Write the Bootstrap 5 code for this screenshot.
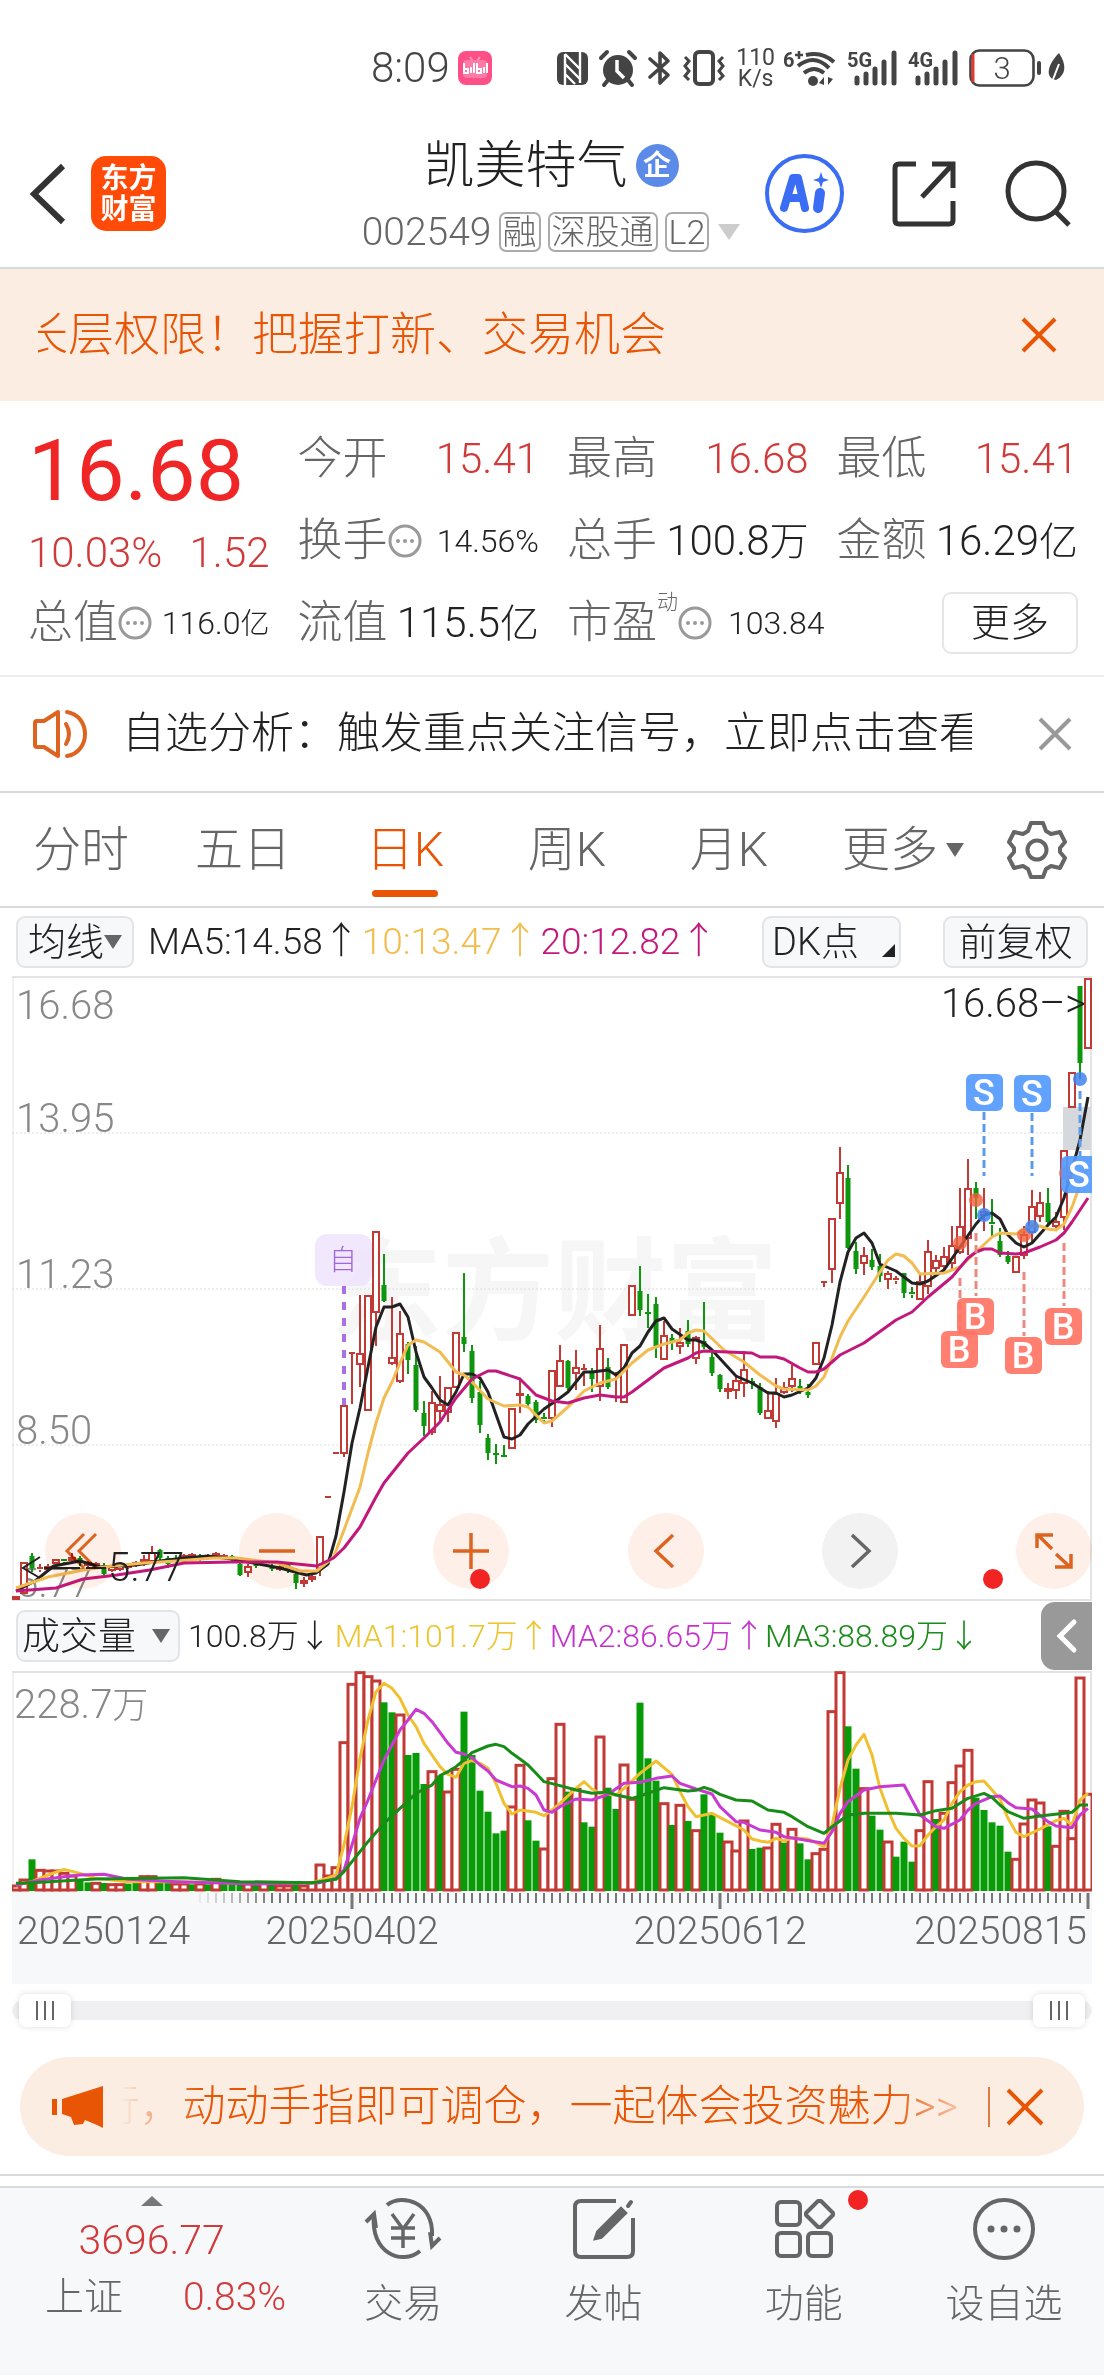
<!DOCTYPE html>
<html lang="zh-CN">
<head>
<meta charset="utf-8">
<meta name="viewport" content="width=device-width, initial-scale=1">
<title>凯美特气 002549</title>
<link href="https://cdn.jsdelivr.net/npm/bootstrap@5.3.0/dist/css/bootstrap.min.css" rel="stylesheet">
<style>
:root{--ink:#222;--gray:#666;--pale:#999;--up:#d03a3a;--brand:#e85505;--tint:#fcede3;--panel:#f7f8fa;--rule:#d9dadc}
body{font-family:Roboto,"Noto Sans CJK SC",sans-serif;font-weight:300;color:var(--ink);background:#fff;line-height:1.2}
button{font-weight:300;color:inherit}
svg{display:block;flex:none;overflow:visible}
svg text{font-family:Roboto,"Noto Sans CJK SC",sans-serif;font-weight:300}
.plain{border:0;background:none;padding:0}
.c-gray{color:var(--gray)}.c-up{color:var(--up)}.c-brand{color:var(--brand)}
.status-row{height:120px;padding:16px 38px 0 371px;color:#444;font-size:42px}
.status-icons{gap:11px}
.net-rate{font-size:23px;line-height:21px;font-weight:400}
.app-head{height:149px;border-bottom:2px solid var(--rule);padding:0 32px 0 30px}
.brand-box{width:75px;height:75px;border-radius:15px;background:#ff4a08;color:#fff;font-weight:700;font-size:28px;line-height:31px}
.stock-name{font-size:51px;line-height:66px}
.stock-code{font-size:39px;line-height:66px;color:var(--gray);gap:7px}
.tag-box{font-size:34px;line-height:36px;border:2px solid #aaa;border-radius:7px;padding:0 2px}
.corp-dot{width:43px;height:43px;border-radius:50%;background:#5b8ae8;color:#fff;font-weight:700;font-size:28px}
.notice{height:132px;background:var(--tint);font-size:46px;padding:0 47px 0 38px}
.clip{overflow:hidden;white-space:nowrap}
.notice .clip{width:628px;direction:rtl}
.notice .clip span{direction:ltr;unicode-bidi:embed}
.quote{display:grid;grid-template-columns:repeat(4,minmax(0,1fr));grid-auto-rows:82px;column-gap:28px;padding:17px 26px 11px 28px;border-bottom:2px solid #ececec}
.quote .big{grid-row:span 2}
.price{font-size:86px;line-height:106px;font-weight:400;color:#f02525}
.change{font-size:42px;line-height:58px}
.cell{font-size:45px;white-space:nowrap}
.num{font-size:42px}.num-s{font-size:32px}
.wan{font-size:39px}.wan-s{font-size:29px}
.dyn{font-size:21px;color:var(--gray);align-self:flex-start;margin-top:8px}
.more-btn{width:136px;height:62px;border:2px solid #e6e6e6;border-radius:9px;font-size:39px}
.ticker{height:116px;border-bottom:2px solid var(--rule);padding:0 32px;font-size:43px}
.ticker .clip{margin:0 66px 0 34px}
.tabs-row{height:115px;border-bottom:2px solid var(--rule);font-size:48px;padding-right:26px;color:var(--gray)}
.tabs-row button{flex:162 1 0;height:100%;position:relative}
.tabs-row .wide{flex-grow:186}.tabs-row .gear{flex-grow:82}
.tabs-row .on{color:var(--brand)}
.tabs-row .on::after{content:"";position:absolute;left:50%;bottom:9px;width:66px;margin-left:-33px;height:7px;border-radius:4px;background:var(--brand)}
.chip{height:52px;background:var(--panel);border:2px solid #e2e4e8;border-radius:9px;font-size:38px;line-height:46px;white-space:nowrap}
.chip-l{width:118px}.chip-m{width:139px}.chip-r{width:145px}
.ind-row{height:68px;padding:0 16px;font-size:37px;white-space:nowrap;gap:2px}
.vol-row{height:70px;padding-left:16px;font-size:32px;white-space:nowrap}
.side-tab{width:51px;height:68px;background:#999;border-radius:14px 0 0 14px;margin-right:12px}
.plot{margin:0 12px;position:relative}
.plot svg.fit{width:100%;height:auto;overflow:hidden}
.tools{position:absolute;left:33px;right:0;bottom:12px;mix-blend-mode:multiply}
.tools button{width:76px;height:76px;border-radius:50%;background:#fef0e9;position:relative}
.tools .off{background:#f2f2f2}
.red-dot{position:absolute;width:20px;height:20px;border-radius:50%;background:#f22323}
.range-row{height:73px;margin:0 12px;position:relative}
.track{position:absolute;left:0;right:0;top:17px;height:19px;border-radius:10px;background:#f0f0f2}
.range-row input{position:absolute;left:7px;right:7px;top:10px;width:calc(100% - 14px);height:33px;margin:0;appearance:none;background:none;pointer-events:none}
.range-row input::-webkit-slider-thumb{appearance:none;pointer-events:auto;width:52px;height:33px;border-radius:7px;box-shadow:0 0 6px #0002;background:linear-gradient(#666,#666) 17px 7px/2px 19px no-repeat,linear-gradient(#666,#666) 25px 7px/2px 19px no-repeat,linear-gradient(#666,#666) 33px 7px/2px 19px no-repeat,#fff}
.promo{height:99px;margin:0 20px 18px;border-radius:50px;background:var(--tint);font-size:43px;padding:0 40px 0 32px}
.promo .fade-text{margin-left:16px;width:838px;direction:rtl;-webkit-mask-image:linear-gradient(90deg,transparent,#000 80px,#000 770px,#0004 840px)}
.promo .fade-text span{direction:ltr;unicode-bidi:embed}
.gap-strip{height:12px;border-top:2px solid var(--rule)}
.bottom-nav{height:189px;background:var(--panel);border-top:2px solid var(--rule);color:var(--gray);font-size:39px}
.bottom-nav .idx{flex:303 1 0;padding-top:8px;line-height:54px}
.bottom-nav .item{flex:200 1 0;position:relative;padding-top:8px;text-decoration:none;color:inherit;line-height:48px;gap:18px}
.idx .val{font-size:41px;line-height:60px}
.idx .pair{gap:60px;padding-left:28px}
</style>
</head>
<body>
<div class="status-row d-flex align-items-center">
  <span>8:09</span>
  <svg class="ms-2" width="34" height="34" viewBox="0 0 34 34"><rect width="34" height="34" rx="8" fill="#ff4f87"/><path d="M12 6l3 4M22 6l-3 4" stroke="#ff9dbd" stroke-width="2"/><rect x="5" y="9" width="24" height="18" rx="4" fill="#ff7aa5"/><path d="M6 12v10h4v-4H6M13 16v6M16 12v10M19 12v10h4v-4h-4M26 16v6M29 12v10" stroke="#fff" stroke-width="2" fill="none"/></svg>
  <div class="status-icons d-flex align-items-center ms-auto">
    <svg width="31" height="33" viewBox="0 0 31 33"><rect width="31" height="33" rx="6" fill="#444"/><path d="M8 33V2M8 2l15 15M8 12l15 15M8 22l10 10M23 0v31" stroke="#fff" stroke-width="2.4" fill="none"/></svg>
    <svg width="38" height="36" viewBox="0 0 38 36"><circle cx="19" cy="20" r="15" fill="#444"/><path d="M2 8l6-6M36 8l-6-6M9 30l-4 5M29 30l4 5" stroke="#444" stroke-width="4" stroke-linecap="round"/><path d="M18 10v11l7 7" stroke="#fff" stroke-width="3.5" fill="none"/></svg>
    <svg width="24" height="36" viewBox="0 0 24 36"><path d="M2 9l18 16-8 8V3l8 8L2 27" fill="none" stroke="#444" stroke-width="3.6" stroke-linejoin="round" stroke-linecap="round"/></svg>
    <svg width="42" height="36" viewBox="0 0 42 36"><rect x="12" y="2" width="18" height="32" rx="4" fill="none" stroke="#444" stroke-width="4"/><path d="M2 7l4 4-4 5 4 5-4 5 4 4M40 7l-4 4 4 5-4 5 4 5-4 4" fill="none" stroke="#444" stroke-width="3"/></svg>
    <div class="net-rate text-center">110<br>K/s</div>
    <svg width="50" height="38" viewBox="0 0 50 38"><text x="-3" y="18" font-size="20" fill="#444" style="font-weight:700">6</text><path d="M9 6h8M13 2v8" stroke="#444" stroke-width="2.5"/><g fill="none" stroke="#444" stroke-width="4"><path d="M20 6Q36 2 48 13M12 17Q28 4 43 19M18 24q10-8 20 0"/></g><circle cx="27" cy="32" r="5" fill="#444"/><path d="M33 34l5-6v8zM47 30l-5 6v-8z" fill="#444"/></svg>
    <svg width="50" height="36" viewBox="0 0 50 36"><text x="0" y="17" font-size="20" fill="#444" style="font-weight:700">5G</text><path d="M10 28v5M19 24v9M28 19v14M37 12v21M47 3v30" stroke="#444" stroke-width="5" stroke-linecap="round"/></svg>
    <svg width="50" height="36" viewBox="0 0 50 36"><text x="0" y="17" font-size="20" fill="#444" style="font-weight:700">4G</text><path d="M10 28v5M19 24v9M28 19v14M37 12v21M47 3v30" stroke="#444" stroke-width="5" stroke-linecap="round"/></svg>
    <svg width="72" height="38" viewBox="0 0 72 38"><rect x="1.500" y="1.500" width="63" height="35" rx="9" fill="none" stroke="#444" stroke-width="2.600"/><path d="M4 5v28" stroke="#e5392f" stroke-width="3"/><path d="M70 14v10" stroke="#444" stroke-width="4" stroke-linecap="round"/><text x="33" y="30" font-size="31" text-anchor="middle" fill="#444">3</text></svg>
    <svg style="margin-left:-6px" width="20" height="32" viewBox="0 0 20 32"><path d="M13 1c8 12 7 22-3 27C-2 26 2 12 13 1z" fill="#444"/><path d="M13 12L6 30" stroke="#fff" stroke-width="2"/></svg>
  </div>
</div>

<header class="app-head d-flex align-items-center">
  <div class="d-flex align-items-center" style="flex:1 1 0">
    <button class="plain" aria-label="返回"><svg width="37" height="62" viewBox="0 0 37 62"><path d="M33 3L4 31l29 28" fill="none" stroke="#333" stroke-width="6"/></svg></button>
    <div class="brand-box d-flex align-items-center justify-content-center ms-4 text-center"><span>东方<br>财富</span></div>
  </div>
  <div style="padding-top:10px">
    <div class="stock-name d-flex align-items-center justify-content-center gap-2"><span>凯美特气</span><span class="corp-dot d-flex align-items-center justify-content-center">企</span></div>
    <div class="stock-code d-flex align-items-center justify-content-center"><span>002549</span><span class="tag-box">融</span><span class="tag-box">深股通</span><span class="tag-box">L2</span><svg width="24" height="18" viewBox="0 0 24 18"><path d="M2 1h22L13 17z" fill="#ccc"/></svg></div>
  </div>
  <div class="d-flex align-items-center justify-content-end" style="flex:1 1 0;gap:48px">
    <button class="plain" aria-label="Ai"><svg width="79" height="79" viewBox="0 0 79 79"><circle cx="39.500" cy="39.500" r="37.500" fill="#fff" stroke="#3a6cf4" stroke-width="4"/><g fill="none" stroke="#3a6cf4" stroke-linejoin="round" stroke-linecap="round"><path d="M19 54l9-30h5l7 30M24 44h12" stroke-width="8"/><path d="M55 39l-2 15" stroke-width="10"/></g><path d="M56 18l2 6 6 2-6 2-2 6-2-6-6-2 6-2z" fill="#3a6cf4"/></svg></button>
    <button class="plain" aria-label="分享"><svg width="64" height="66" viewBox="0 0 64 66"><path d="M24 3H7q-4 0-4 4v52q0 4 4 4h50q4 0 4-4V40" fill="none" stroke="#333" stroke-width="5"/><path d="M40 3h21v24M60 4L30 36" fill="none" stroke="#333" stroke-width="5"/></svg></button>
    <button class="plain" aria-label="搜索"><svg width="68" height="68" viewBox="0 0 68 68"><circle cx="32" cy="31" r="28" fill="none" stroke="#333" stroke-width="5"/><path d="M51 51l14 14" stroke="#333" stroke-width="5"/></svg></button>
  </div>
</header>

<div class="notice d-flex align-items-center justify-content-between c-brand">
  <div class="clip"><span>成长层权限！把握打新、交易机会</span></div>
  <button class="plain c-brand" aria-label="关闭公告"><svg width="36" height="36" viewBox="0 0 36 36"><path d="M2 2l32 32M34 2L2 34" stroke="currentColor" stroke-width="4"/></svg></button>
</div>

<section class="quote">
  <div class="big"><div class="price">16.68</div><div class="change c-up d-flex justify-content-between"><span>10.03%</span><span>1.52</span></div></div>
  <div class="cell d-flex align-items-center justify-content-between"><span class="c-gray">今开</span><span class="num c-up">15.41</span></div>
  <div class="cell d-flex align-items-center justify-content-between"><span class="c-gray">最高</span><span class="num c-up">16.68</span></div>
  <div class="cell d-flex align-items-center justify-content-between"><span class="c-gray">最低</span><span class="num c-up">15.41</span></div>
  <div class="cell d-flex align-items-center justify-content-between"><span class="c-gray d-flex align-items-center">换手<svg width="34" height="34" viewBox="0 0 34 34"><use href="#dots"/></svg></span><span class="num-s">14.56%</span></div>
  <div class="cell d-flex align-items-center justify-content-between"><span class="c-gray">总手</span><span class="num">100.8<span class="wan">万</span></span></div>
  <div class="cell d-flex align-items-center justify-content-between"><span class="c-gray">金额</span><span class="num">16.29<span class="wan">亿</span></span></div>
  <div class="cell d-flex align-items-center justify-content-between"><span class="c-gray d-flex align-items-center">总值<svg width="34" height="34" viewBox="0 0 34 34"><use href="#dots"/></svg></span><span class="num-s">116.0<span class="wan-s">亿</span></span></div>
  <div class="cell d-flex align-items-center justify-content-between"><span class="c-gray">流值</span><span class="num">115.5<span class="wan">亿</span></span></div>
  <div class="cell d-flex align-items-center"><span class="c-gray">市盈</span><span class="dyn">动</span><svg width="34" height="34" viewBox="0 0 34 34"><use href="#dots"/></svg><span class="num-s ps-3">103.84</span></div>
  <div class="d-flex align-items-center justify-content-end"><button class="more-btn bg-white p-0">更多</button></div>
</section>

<div class="ticker d-flex align-items-center">
  <svg width="56" height="48" viewBox="0 0 56 48"><g fill="none" stroke="#dd6420" stroke-width="4" stroke-linejoin="round"><path d="M3 13q0-2 2-2h7L26 2v44L12 37H5q-2 0-2-2z"/><path d="M34 14q6 10 0 20M35 2c24 4 24 40 0 44" stroke-linecap="round"/></g></svg>
  <div class="clip flex-fill">自选分析：触发重点关注信号，立即点击查看</div>
  <button class="plain" aria-label="关闭提示"><svg width="34" height="34" viewBox="0 0 34 34"><path d="M2 2l30 30M32 2L2 32" stroke="#999" stroke-width="4"/></svg></button>
</div>

<nav class="tabs-row d-flex align-items-center">
  <button class="plain">分时</button><button class="plain">五日</button><button class="plain on">日K</button><button class="plain">周K</button><button class="plain">月K</button>
  <button class="plain wide d-flex align-items-center justify-content-center gap-2">更多<svg width="18" height="14" viewBox="0 0 18 14"><path d="M0 0h18L9 14z" fill="#666"/></svg></button>
  <button class="plain gear d-flex align-items-center justify-content-center" aria-label="设置"><svg width="60" height="60" viewBox="0 0 60 60"><path d="M24 3h12l3 8 5 3 9-2 5 10-5 6v4l5 6-5 10-9-2-5 3-3 8H24l-3-8-5-3-9 2-5-10 5-6v-4l-5-6 5-10 9 2 5-3z" fill="none" stroke="#666" stroke-width="4" stroke-linejoin="round"/><circle cx="30" cy="30" r="9.500" fill="none" stroke="#666" stroke-width="4"/></svg></button>
</nav>

<div class="ind-row d-flex align-items-center">
  <button class="chip chip-l d-flex align-items-center justify-content-center p-0">均线<svg width="18" height="16" viewBox="0 0 18 16"><path d="M0 1h18L9 15z" fill="#666"/></svg></button>
  <span class="ps-2 ms-1">MA5:14.58↑</span><span style="color:#f3bd4e">10:13.47↑</span><span style="color:#c2187c">20:12.82↑</span>
  <button class="chip chip-m d-flex align-items-center justify-content-between ms-auto ps-2 pe-1 me-4">DK点<svg class="align-self-end mb-2" width="13" height="13" viewBox="0 0 13 13"><path d="M13 0v13H0z" fill="#222"/></svg></button>
  <button class="chip chip-r ms-3 p-0">前复权</button>
</div>

<div class="plot">
  <svg class="fit" id="kline" viewBox="0 0 1080 625"></svg>
  <div class="tools d-flex justify-content-between">
    <button class="plain d-flex align-items-center justify-content-center" aria-label="最左"><svg width="34" height="38" viewBox="0 0 34 38"><path d="M18 2L1 19l17 17M30 2L13 19l17 17" fill="none" stroke="#dd6420" stroke-width="3"/></svg></button>
    <button class="plain d-flex align-items-center justify-content-center" aria-label="缩小"><svg width="38" height="38" viewBox="0 0 38 38"><path d="M1 19h36" stroke="#dd6420" stroke-width="3.500"/></svg></button>
    <button class="plain d-flex align-items-center justify-content-center" aria-label="放大"><svg width="38" height="38" viewBox="0 0 38 38"><path d="M1 19h36M19 1v36" stroke="#dd6420" stroke-width="3.500"/></svg><i class="red-dot" style="right:19px;bottom:0"></i></button>
    <button class="plain d-flex align-items-center justify-content-center" aria-label="左移"><svg width="24" height="36" viewBox="0 0 24 36"><path d="M19 2L2 18l17 16" fill="none" stroke="#dd6420" stroke-width="3.500"/></svg></button>
    <button class="plain off d-flex align-items-center justify-content-center" aria-label="右移"><svg width="20" height="36" viewBox="0 0 20 36"><path d="M2 2l17 16L2 34" fill="none" stroke="#666" stroke-width="3.500"/></svg></button>
    <button class="plain d-flex align-items-center justify-content-center" aria-label="全屏"><svg width="38" height="38" viewBox="0 0 38 38"><path d="M2 16V3h16M3 3l14 14M36 22v13H20M35 35L21 22" fill="none" stroke="#dd6420" stroke-width="3.500"/></svg><i class="red-dot" style="left:-33px;bottom:0"></i></button>
  </div>
</div>

<div class="vol-row d-flex align-items-center">
  <button class="chip d-flex align-items-center ps-1 pe-2 gap-3">成交量<svg width="18" height="14" viewBox="0 0 18 14"><path d="M0 0h18L9 14z" fill="#666"/></svg></button>
  <span class="ms-2 me-1">100.8万↓</span><span style="color:#ecc52e">MA1:101.7万↑</span><span style="color:#c434cc">MA2:86.65万↑</span><span style="color:#1b8c1b">MA3:88.89万↓</span>
  <button class="plain side-tab ms-auto d-flex align-items-center justify-content-center" aria-label="展开"><svg width="20" height="34" viewBox="0 0 20 34"><path d="M17 3L3 17l14 14" fill="none" stroke="#fff" stroke-width="5" stroke-linecap="round"/></svg></button>
</div>
<div class="plot"><svg class="fit" id="volume" viewBox="0 0 1080 313"></svg></div>

<div class="range-row">
  <div class="track"></div>
  <input type="range" min="0" max="134" value="0" aria-label="起始日期">
  <input type="range" min="0" max="134" value="134" aria-label="结束日期">
</div>

<div class="promo d-flex align-items-center c-brand">
  <svg width="52" height="44" viewBox="0 0 52 44"><path d="M0 14h5v16H0zM10 14L51 1v42l-6-3-12-5-2 4-9 1-3-8-9-3z" fill="#e85505"/></svg>
  <div class="clip fade-text"><span>行，动动手指即可调仓，一起体会投资魅力&gt;&gt;</span></div>
  <svg class="ms-auto me-3" width="2" height="40" viewBox="0 0 2 40"><path d="M1 0v40" stroke="#e07a45" stroke-width="2"/></svg>
  <button class="plain c-brand" aria-label="关闭推广"><svg width="38" height="38" viewBox="0 0 38 38"><path d="M2 2l34 34M36 2L2 36" stroke="currentColor" stroke-width="4"/></svg></button>
</div>
<div class="gap-strip"></div>

<nav class="bottom-nav d-flex">
  <div class="idx text-center">
    <svg class="mx-auto" width="22" height="10" viewBox="0 0 22 10"><path d="M0 10L11 0l11 10z" fill="#777"/></svg>
    <div class="val c-up mt-1">3696.77</div>
    <div class="pair d-flex justify-content-center"><span>上证</span><span class="c-up">0.83%</span></div>
  </div>
  <a class="item d-flex flex-column align-items-center" href="#trade"><svg width="74" height="66" viewBox="0 0 74 66"><g fill="none" stroke="#666" stroke-width="4"><path d="M21 9C36-3 68 6 66 40M54 55C36 70 4 57 8 19M0 26l8-8 2 14M74 42l-8 8-2-14"/><path d="M26 18l11 15 11-15M37 33v19M25 32h24M25 42h24" stroke-width="3.500"/></g></svg><span>交易</span></a>
  <a class="item d-flex flex-column align-items-center" href="#post"><svg width="64" height="66" viewBox="0 0 64 66"><path d="M44 5H9q-6 0-6 6v44q0 6 6 6h46q6 0 6-6V22" fill="none" stroke="#666" stroke-width="4"/><path d="M56 10l3-4M24 42l2-6 23-23 4 4-24 24z" fill="#666" stroke="#666" stroke-width="4" stroke-linecap="round"/></svg><span>发帖</span></a>
  <a class="item d-flex flex-column align-items-center" href="#features"><svg width="62" height="66" viewBox="0 0 62 66"><g fill="none" stroke="#666" stroke-width="4"><rect x="4" y="6" width="23" height="23" rx="4"/><rect x="4" y="37" width="23" height="23" rx="4"/><rect x="35" y="37" width="23" height="23" rx="4"/><path d="M45 5l3 0 12 12v2L48 31h-3L33 19v-2z" stroke-linejoin="round"/></g></svg><i class="red-dot" style="left:50%;top:2px;margin-left:44px"></i><span>功能</span></a>
  <a class="item d-flex flex-column align-items-center" href="#watch"><svg width="64" height="66" viewBox="0 0 64 66"><circle cx="32" cy="33" r="29" fill="none" stroke="#666" stroke-width="4"/><g fill="#666"><circle cx="19" cy="33" r="3.500"/><circle cx="32" cy="33" r="3.500"/><circle cx="45" cy="33" r="3.500"/></g></svg><span>设自选</span></a>
</nav>

<svg width="0" height="0" class="position-absolute"><defs><g id="dots"><circle cx="17" cy="17" r="15" fill="none" stroke="#999" stroke-width="3"/><circle cx="10" cy="17" r="2" fill="#999"/><circle cx="17" cy="17" r="2" fill="#999"/><circle cx="24" cy="17" r="2" fill="#999"/></g></defs></svg>

<script src="https://cdn.jsdelivr.net/npm/bootstrap@5.3.0/dist/js/bootstrap.bundle.min.js"></script>
<script>
// One entry per trading day: colour, high, body top, body bottom, low (chart units)
const candles = `r 620 620 624 624|r 586 586 618 618|g 577 580 592 596|r 588 592 594 596|r 588 590 594 596|r 583 583 588 588|g 583 584 586 587|r 577 581 585 588|g 580 582 586 590|r 585 586 590 591|r 586 587 590 591|g 587 590 598 599|r 590 590 595 596|r 588 589 594 595|r 587 588 592 593|r 585 586 590 591|r 579 583 587 590|r 570 576 586 588|g 573 574 582 586|g 580 582 588 592|g 579 582 586 587|r 578 579 584 586|r 577 578 582 583|g 578 580 583 585|r 578 579 582 583|r 576 577 581 583|r 578 579 582 583|g 579 580 584 586|g 585 588 599 600|r 588 590 597 601|g 585 587 590 592|g 584 586 588 590|g 588 590 593 595|r 587 590 594 595|g 587 588 592 597|g 592 598 607 613|r 601 604 608 611|r 598 600 604 606|r 560 560 593 600|r 521 521 521 521|r 477 477 477 477|r 429 429 478 481|r 377 377 377 428|r 319 377 389 411|r 319 319 435 435|r 255 255 337 370|g 278 309 325 326|r 321 381 388 389|r 335 357 406 407|g 366 368 384 398|g 370 389 434 436|g 425 437 450 460|r 415 426 457 459|r 400 428 436 447|r 411 411 437 446|r 356 356 412 412|g 297 361 368 376|g 369 375 422 427|g 405 416 449 457|g 458 462 477 484|g 468 478 478 488|g 469 480 480 481|r 432 432 473 473|r 403 417 420 437|g 418 420 428 430|g 424 426 444 447|g 437 442 444 448|r 394 394 443 451|r 369 384 411 411|g 384 385 412 414|r 374 391 398 414|r 388 393 395 410|g 392 395 403 416|r 349 372 411 425|g 382 391 411 413|r 396 398 400 426|r 368 368 427 427|r 309 309 340 340|g 290 315 334 340|g 318 337 338 352|g 321 328 372 382|r 345 359 384 384|g 358 362 367 374|r 352 366 371 378|g 344 355 368 371|r 360 361 383 388|g 326 365 371 373|g 375 381 397 400|g 398 399 413 416|r 407 412 416 423|r 401 404 415 423|r 375 393 408 421|g 402 406 408 413|g 407 411 437 439|r 415 434 443 443|r 402 417 446 452|r 406 411 417 418|r 389 402 411 416|g 403 410 414 418|g 408 416 419 422|r 366 366 389 389|r 306 306 307 311|r 242 242 294 307|r 171 196 228 243|g 189 202 272 273|g 266 275 293 298|r 271 279 288 299|g 273 284 291 294|g 278 290 300 306|r 295 297 304 313|r 300 303 305 308|g 297 297 317 322|g 311 317 319 322|r 297 305 324 324|r 264 275 311 318|r 279 284 293 300|r 271 280 291 296|r 250 269 288 293|r 212 250 277 278|r 183 212 263 279|g 206 212 222 243|r 212 235 240 255|g 223 247 249 260|g 252 265 279 281|g 275 280 286 288|r 280 280 297 297|r 250 258 280 283|r 214 230 257 268|r 216 226 241 246|g 212 227 246 250|r 236 245 251 252|r 174 174 242 254|r 96 96 132 132|g 10 10 87 103|r 2 2 73 73`.split("|").map(s => s.split(" "));
const ma5 = "0 615,2.4 605,4.7 590,8 585,10.5 591,15 589,18 585,21 582,24 580,27 583,31 589,33 592,36.3 599,37.5 597,39 588,40 560,41 516,42 467,43 432,44 391,45 351,46 331,47 331,48 328,49 341,50 376,51 401,52 412,53 424,54 429,55 416,56 398,57 398,58 402,59 416,61 461,62 463,63 459,64 448,66 433,68 422,69 416,71 396,72 396,74 394,75 399,76 392,77 377,78 370,79 356,80 345,81 342,82 353,84 364,85 364,86 367,87 374,90 400,92 407,94 417,95 417,96 421,97 419,99 412,100 402,101 382,102 349,103 306,104 276,105 262,106 257,107 267,108 288,110 295,111 301,112 307,113 308,114 305,116 294,118 271,120 248,121 239,122 237,123 243,124 259,125 267,126 271,127 267,129 249,130 241,131 222,132 194,133 164,134 121";
const ma10 = "0 612,4 601,8.4 594,12 590,16 587,20 585,24.7 582,27.6 582,32.6 587,35.5 595,37.6 595,39.7 581,41 554,43 511,44 477,45 447,46 422,47 406,48 387,49 369,50 364,51 366,53 376,55 396,56 399,57 406,59 423,61 430,63 429,64 431,66 447,67 445,69 431,71 415,73 407,75 403,77 387,79 374,81 368,83 364,84 357,85 354,86 355,88.5 374,91 386,93 399,95 410,96 413,99 414,100 410,101 401,102 382,103 361,104 345,106 321,108 296,109 284,110 278,111 280,112 287,113 298,116 297,118 291,120 276,122 261,123 257,125 258,127 250,128 250,129 253,130 254,131 248,132 231,133 209,134 190";
const ma20 = "0 615,5 612,8.4 603,12.6 599,16.7 594,21 587,27 586,32.6 586,37.6 590,39.7 582,41 572,43 551,44 536,45 521,46 507,48 487,49 477,51 462,53 446,55 422,57 403,59 395,60 395,63 403,65 419,67 425,69 427,71 422,73 419,75 421,76 421,77 416,79 404,81 392,84 382,85 377,86 375,92 377,93 381,95 381,96 383,98 392,99 396,100 396,101 393,103 379,106 367,110 344,112 336,114 321,117 301,119 282,120 276,121 273,122 273,123 277,125 278,126 277,128 271,130 264,131 257,132 246,134 222";
// Volume per day, full scale 655 = 228.7万; a minus sign marks a falling day
const vol = [15,33,-92,62,60,60,53,45,-33,-23,23,-21,19,19,-19,-27,43,43,-25,-21,21,21,-17,21,-17,35,-21,-21,-21,21,-17,25,-17,15,15,-27,15,25,78,45,70,445,620,655,643,630,-563,-533,528,-405,-411,-318,358,-343,297,365,-535,-405,-298,-235,-170,-178,252,377,-209,-148,126,337,500,-295,305,-203,-190,462,-307,-243,378,275,-562,-395,-328,262,-195,257,-207,181,-287,-225,-172,147,120,210,-123,-127,129,200,-142,185,-140,-92,112,125,538,655,-491,-364,307,-223,-181,147,-100,-145,-85,181,328,-213,233,325,375,422,-277,-240,-203,-193,-115,95,201,273,264,-191,134,239,157,639,290];
const v1 = "0 15,2 25,4 45,6 62,8 50,10 35,14 25,20 25,30 20,37 22,39 36,40 45,41 135,42 250,43 395,44 510,45 595,46 620,47 605,48 575,49 525,50 490,51 440,52 405,53 370,54 347,55 338,56 380,57 388,58 380,59 365,60 320,61 260,62 228,63 240,65 233,66 223,67 240,68 260,70 305,71 325,72 303,73 290,75 285,76 305,78 350,80 387,82 347,83 295,84 250,85 220,87 230,89 205,91 180,92 153,93 147,94 143,95 155,96 147,97 157,99 153,101 130,102 195,103 305,104 390,105 435,106 467,107 405,108 305,109 240,110 185,111 155,112 132,113 133,114 165,115 190,116 210,117 260,118 295,119 315,120 325,121 327,122 300,123 273,124 215,125 173,126 160,128 183,130 208,131 215,132 195,133 270,134 290";
const v2 = "0 15,3 30,6 40,8 45,11 47,14 32,20 25,30 18,38 22,40 35,41 60,42 135,43 215,44 270,45 330,46 390,47 435,48 480,49 510,50 542,51 530,52 505,53 473,54 440,55 413,56 408,57 397,58 375,59 357,60 330,62 310,63 312,64 305,65 285,66 240,67 233,68 250,70 273,72 270,74 287,76 320,78 323,80 335,82 342,83 320,85 303,87 288,88 250,90 205,91 203,93 180,95 173,96 160,98 152,101 140,102 175,103 230,104 265,106 300,108 310,111 315,112 270,113 225,115 190,116 185,118 210,119 240,120 260,122 280,123 282,124 262,125 247,127 243,129 205,130 192,132 187,133 225,134 245";
const v3 = "0 20,2 22,10 33,21 37,28 25,37 22,40 32,41 55,42 85,44 145,46 200,48 245,50 290,52 315,53 343,54 355,55 370,56 390,57 412,59 432,60 437,61 430,62 410,63 393,64 375,65 350,66 325,68 313,70 300,72 290,74 294,75 285,77 275,78 282,81 307,84 297,85 299,86 308,87 300,88 287,90 270,92 267,94 240,96 233,97 220,98 205,99 190,101 170,102 190,104 225,106 230,110 230,113 225,115 238,117 245,119 275,121 290,122 278,123 255,124 235,126 215,128 222,131 230,132 233,133 255,134 255";

const px = i => 4 + 8 * i;
const line = (s, color, y = v => v) => `<polyline fill="none" stroke="${color}" stroke-width="3" stroke-linejoin="round" points="${s.split(",").map(p => { const [i, v] = p.split(" ").map(Number); return px(i) + " " + y(v); }).join(" ")}"/>`;
const seg = (x1, y1, x2, y2, color, w, extra = "") => `<path d="M${x1} ${y1}L${x2} ${y2}" stroke="${color}" stroke-width="${w}" ${extra}/>`;
const label = (x, y, t, size = 40, color = "#888", extra = "") => `<text x="${x}" y="${y}" font-size="${size}" fill="${color}" ${extra}>${t}</text>`;

let k = `<text x="318" y="356" font-size="112" fill="#f6f6f6" style="font-weight:700">东方财富</text>`;
k += seg(0, 1, 1080, 1, "#e3e3e3", 2) + seg(0, 624, 1080, 624, "#e3e3e3", 2) + seg(1, 0, 1, 625, "#e3e3e3", 1) + seg(1079, 0, 1079, 625, "#e3e3e3", 2);
[157, 313, 469].forEach(y => k += seg(0, y, 1080, y, "#dcdcdc", 1, 'stroke-dasharray="2 2"'));
k += `<rect x="1051" y="131" width="28" height="43" fill="#d5d8dc"/>`;
k += label(4, 43, "16.68") + label(4, 156, "13.95") + label(4, 312, "11.23") + label(4, 468, "8.50") + label(4, 621, "5.77");
k += `<rect x="303" y="258" width="57" height="52" rx="12" fill="#efe2fd" fill-opacity=".8"/>` + label(331, 294, "自", 28, "#a266dd", 'text-anchor="middle"') + seg(332, 310, 332, 429, "#a972e0", 4, 'stroke-dasharray="8 8"');
candles.forEach(([c, hi, top, bot, lo], i) => {
  const x = px(i), h = bot - top, col = c === "r" ? "#c23a35" : "#0f960f";
  if (+hi < +top) k += seg(x, hi, x, top, col, 2);
  if (+lo > +bot) k += seg(x, bot, x, lo, col, 2);
  if (h < 3) k += seg(x - 3, top, x + 3, top, col, 2);
  else if (c === "r") k += `<rect x="${x - 3}" y="${+top + 1}" width="6" height="${h - 2}" fill="#fff" stroke="${col}" stroke-width="2"/>`;
  else k += `<rect x="${x - 2.5}" y="${top}" width="5" height="${h}" fill="${col}"/>`;
});
k += line(ma5, "#222") + line(ma10, "#f1bc52") + line(ma20, "#c2187c");
[[972, 136, 200], [1020, 137, 200], [1068, 115, 180]].forEach(([x, a, b]) => k += seg(x, a, x, b, "#5f9ce8", 3, 'stroke-dasharray="8 4"'));
[[948, 302, 355], [964, 257, 320], [1012, 296, 360], [1052, 267, 330]].forEach(([x, a, b]) => k += seg(x, a, x, b, "#e98a80", 3, 'stroke-dasharray="8 4"'));
[[964, 224], [948, 267], [1012, 259], [1054, 197]].forEach(([x, y]) => k += `<circle cx="${x}" cy="${y}" r="7" fill="#f0603c" fill-opacity=".8"/>`);
[[972, 239], [1020, 251], [1068, 103]].forEach(([x, y]) => k += `<circle cx="${x}" cy="${y}" r="7" fill="#3f83f0" fill-opacity=".85"/>`);
const sign = (x, y, t, color) => `<rect x="${x}" y="${y}" width="37" height="37" rx="6" fill="${color}" fill-opacity=".92"/><text x="${x + 18}" y="${y + 31}" font-size="36" fill="#fff" text-anchor="middle" style="font-weight:500">${t}</text>`;
k += sign(954, 98, "S", "#559aff") + sign(1002, 99, "S", "#559aff") + sign(1049, 180, "S", "#559aff");
k += sign(929, 355, "B", "#ff7464") + sign(945, 322, "B", "#ff7464") + sign(993, 361, "B", "#ff7464") + sign(1033, 332, "B", "#ff7464");
k += label(1074, 41, "16.68–&gt;", 40, "#222", 'text-anchor="end"');
k += label(96, 605, "5.77", 40, "#222") + `<path d="M28 581L11 592l17 10M32 592h36M74 592h20" fill="none" stroke="#222" stroke-width="2"/>`;
document.getElementById("kline").innerHTML = k;

const vy = v => 219 - v / 3;
let g = `<rect x="0" y="221" width="1080" height="92" fill="#f7f8fa"/>` + seg(0, 1, 1080, 1, "#e3e3e3", 2) + seg(1, 0, 1, 220, "#e3e3e3", 1) + seg(1079, 0, 1079, 220, "#e3e3e3", 2);
g += `<text x="2" y="47" font-size="40" fill="#888">228.7<tspan font-size="36">万</tspan></text>`;
vol.forEach((v, i) => {
  const x = px(i), y = vy(Math.abs(v));
  g += v > 0 ? `<rect x="${x - 4}" y="${y + 1}" width="8" height="${218 - y}" fill="#fff" stroke="#c23a35" stroke-width="3"/>` : `<rect x="${x - 3.5}" y="${y}" width="7" height="${220 - y}" fill="#079b07"/>`;
});
g += line(v1, "#f0c030", vy) + line(v2, "#c83ad0", vy) + line(v3, "#178c17", vy);
for (let i = 23; i < 135; i++) {
  const major = i === 42 || i === 88 || i === 134;
  g += seg(px(i), 222, px(i), major ? 238 : 232, "#777", major ? 3 : 2, `stroke-opacity="${Math.min(1, (i - 22) / 10)}"`);
}
g += label(5, 273, "20250124", 39, "#666") + label(340, 273, "20250402", 39, "#666", 'text-anchor="middle"') + label(708, 273, "20250612", 39, "#666", 'text-anchor="middle"') + label(1075, 273, "20250815", 39, "#666", 'text-anchor="end"');
document.getElementById("volume").innerHTML = g;
</script>
</body>
</html>
